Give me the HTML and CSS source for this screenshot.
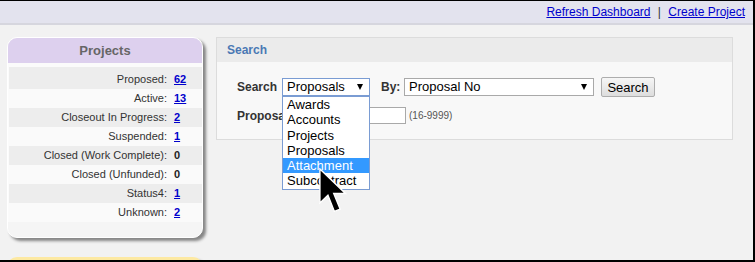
FILE: index.html
```html
<!DOCTYPE html>
<html lang="en">
<head>
  <meta charset="UTF-8" />
  <title>Dashboard</title>
  <link rel="stylesheet" href="styles.css">
</head>
<body>
  <div class="page">
    <div class="topbar">
      <a href="#">Refresh Dashboard</a>
      <span class="sep">|</span>
      <a href="#">Create Project</a>
    </div>

    <div class="content">
      <aside class="sidebar">
        <div class="box projects">
          <div class="box-head">Projects</div>
          <div class="stats">
            <div class="stat"><span class="label">Proposed:</span><a class="val" href="#">62</a></div>
            <div class="stat"><span class="label">Active:</span><a class="val" href="#">13</a></div>
            <div class="stat"><span class="label">Closeout In Progress:</span><a class="val" href="#">2</a></div>
            <div class="stat"><span class="label">Suspended:</span><a class="val" href="#">1</a></div>
            <div class="stat"><span class="label">Closed (Work Complete):</span><span class="val">0</span></div>
            <div class="stat"><span class="label">Closed (Unfunded):</span><span class="val">0</span></div>
            <div class="stat"><span class="label">Status4:</span><a class="val" href="#">1</a></div>
            <div class="stat"><span class="label">Unknown:</span><a class="val" href="#">2</a></div>
          </div>
        </div>
        <div class="box notices"></div>
      </aside>

      <section class="search-panel">
        <div class="panel-head">Search</div>
        <div class="panel-body">
          <div class="form-row">
            <span class="lbl lbl-search">Search</span>
            <div class="select select-type focused">
              <span>Proposals</span>
              <i class="arrow"></i>
              <ul class="dropdown">
                <li>Awards</li>
                <li>Accounts</li>
                <li>Projects</li>
                <li>Proposals</li>
                <li class="active">Attachment</li>
                <li>Subcontract</li>
              </ul>
            </div>
            <span class="lbl lbl-by">By:</span>
            <div class="select select-field">
              <span>Proposal No</span>
              <i class="arrow"></i>
            </div>
            <button class="btn">Search</button>
          </div>
          <div class="form-row row-2">
            <span class="lbl lbl-number">Proposal No:</span>
            <input type="text" class="num-input" />
            <span class="hint">(16-9999)</span>
          </div>
        </div>
      </section>
    </div>

    <svg class="cursor" width="28" height="45" viewBox="0 0 12.2 19.6">
      <path d="M0.4 0.4 L0.4 15.2 L3.9 11.9 L6.7 18.9 L9.2 17.9 L6.4 11.1 L11.5 11.1 Z" fill="#000" stroke="#fff" stroke-width="0.6" stroke-linejoin="miter"/>
    </svg>
  </div>
</body>
</html>
```

FILE: styles.css
```css
html, body {
  margin: 0;
  padding: 0;
}
body {
  font-family: "Liberation Sans", Arial, sans-serif;
  font-size: 12px;
  color: #222;
}
.page {
  position: relative;
  width: 755px;
  height: 262px;
  box-sizing: border-box;
  border-top: 1px solid #000;
  border-right: 2px solid #000;
  border-bottom: 2px solid #000;
  background: #f2f2f2;
  overflow: hidden;
}
.topbar {
  height: 22px;
  line-height: 23px;
  background: #e3e3ee;
  border-bottom: 2px solid #d6d6de;
  text-align: right;
  padding-right: 8px;
  font-size: 12px;
}
.topbar a {
  color: #0000cc;
}
.topbar .sep {
  margin: 0 4px;
  color: #333;
}
.content {
  display: flex;
  align-items: flex-start;
  gap: 13px;
  padding: 12px 0 0 7px;
}
.sidebar {
  width: 196px;
  flex: none;
}
.box {
  border-radius: 10px;
  box-shadow: 3px 3px 3px rgba(0, 0, 0, 0.45);
  overflow: hidden;
}
.projects {
  background: #f5f5f5;
  border: 1px solid #fff;
  box-sizing: border-box;
  height: 201px;
}
.box-head {
  height: 25px;
  line-height: 25px;
  background: #ddd0ee;
  text-align: center;
  font-weight: bold;
  font-size: 13px;
  color: #666;
}
.stats {
  padding: 4px 0 0 1px;
  background: #fbfbfb;
}
.stat {
  display: flex;
  height: 19px;
  line-height: 19px;
  font-size: 11px;
}
.stat:first-child {
  height: 22px;
  line-height: 25px;
}
.stat:nth-child(odd) {
  background: #ededed;
}
.stat:nth-child(even) {
  background: #fafafa;
}
.label {
  width: 158px;
  text-align: right;
  color: #333;
}
.val {
  margin-left: 7px;
  font-weight: bold;
  color: #222;
}
a.val {
  color: #0000cc;
}
.notices {
  margin-top: 19px;
  height: 30px;
  background: #fde9a2;
}
.search-panel {
  width: 517px;
  height: 103px;
  box-sizing: border-box;
  border: 1px solid #dcdcdc;
  background: #f8f8f8;
}
.panel-head {
  height: 24px;
  line-height: 24px;
  background: #ebebeb;
  padding-left: 10px;
  font-weight: bold;
  color: #4a78b4;
}
.panel-body {
  padding: 15px 0 0 20px;
}
.form-row {
  display: flex;
  align-items: center;
  height: 20px;
}
.row-2 {
  margin-top: 10px;
  height: 17px;
}
.lbl {
  font-weight: bold;
  color: #333;
}
.lbl-search {
  width: 45px;
}
.lbl-by {
  margin-left: 11px;
  width: 23px;
}
.lbl-number {
  width: 123px;
  white-space: nowrap;
}
.select {
  position: relative;
  height: 18px;
  box-sizing: border-box;
  border: 1px solid #a9a9a9;
  background: #fff;
  font-size: 13px;
  line-height: 16px;
  padding-left: 4px;
  color: #000;
}
.select.focused {
  border-color: #7a9cd3;
}
.select-type {
  width: 88px;
}
.select-field {
  width: 190px;
}
.arrow {
  position: absolute;
  top: 5px;
  right: 6px;
  width: 0;
  height: 0;
  border-left: 3.5px solid transparent;
  border-right: 3.5px solid transparent;
  border-top: 6px solid #000;
}
.btn {
  margin-left: 7px;
  width: 54px;
  height: 20px;
  padding: 0;
  font-family: "Liberation Sans", Arial, sans-serif;
  font-size: 13px;
  color: #000;
  background: linear-gradient(#f6f6f6, #dddddd);
  border: 1px solid #adadad;
  border-radius: 2px;
}
.num-input {
  width: 46px;
  height: 17px;
  box-sizing: border-box;
  border: 1px solid #a9a9a9;
  background: #fff;
  padding: 0;
}
.hint {
  margin-left: 3px;
  font-size: 10px;
  color: #555;
}
.dropdown {
  position: absolute;
  top: 17px;
  left: -1px;
  width: 88px;
  box-sizing: border-box;
  margin: 0;
  padding: 0;
  list-style: none;
  background: #fff;
  border: 1px solid #7a9cd3;
  z-index: 2;
}
.dropdown li {
  height: 15.3px;
  line-height: 15px;
  padding-left: 4px;
  font-size: 13px;
  color: #000;
}
.dropdown li.active {
  background: #3399ff;
  color: #fff;
}
.cursor {
  position: absolute;
  left: 319px;
  top: 167px;
  z-index: 5;
}
```
